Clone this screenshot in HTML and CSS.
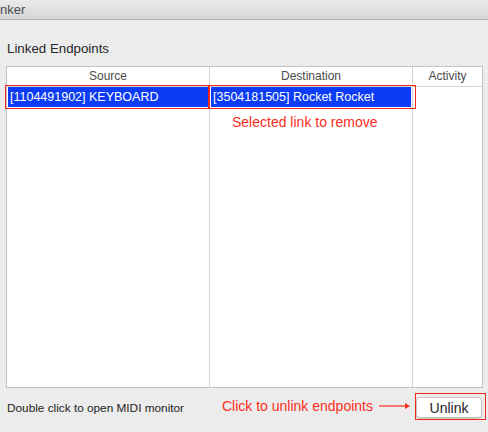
FILE: index.html
```html
<!DOCTYPE html>
<html>
<head>
<meta charset="utf-8">
<link rel="stylesheet" href="styles.css">
</head>
<body>
<div class="window">
  <div class="titlebar"><span class="title">nker</span></div>
  <div class="content">
    <div class="label">Linked Endpoints</div>
    <div class="table">
      <div class="col col-source">
        <div class="head">Source</div>
        <div class="cell selected">[1104491902] KEYBOARD</div>
      </div>
      <div class="col col-dest">
        <div class="head">Destination</div>
        <div class="cell selected">[3504181505] Rocket Rocket</div>
      </div>
      <div class="col col-activity">
        <div class="head">Activity</div>
        <div class="cell"></div>
      </div>
    </div>
    <div class="footer">
      <div class="hint">Double click to open MIDI monitor</div>
      <button class="btn">Unlink</button>
    </div>
    <div class="mark mark-source"></div>
    <div class="mark mark-dest"></div>
    <div class="mark mark-btn"></div>
    <div class="note note-selected">Selected link to remove</div>
    <div class="note note-click">Click to unlink endpoints
      <svg class="arrow" width="32" height="8" viewBox="0 0 32 8"><line x1="0" y1="4" x2="27" y2="4" stroke="#fb2d1c" stroke-width="1.2"/><path d="M26 1 L31 4 L26 7 Z" fill="#fb2d1c"/></svg>
    </div>
  </div>
</div>
</body>
</html>
```
FILE: styles.css
```css
* { box-sizing: border-box; }
html, body { margin: 0; padding: 0; }
body {
  width: 488px;
  height: 432px;
  overflow: hidden;
  background: #ececec;
  font-family: "Liberation Sans", Arial, sans-serif;
  color: #222;
}
.window { position: relative; width: 488px; height: 432px; }
.titlebar {
  height: 20px;
  background: linear-gradient(#ebebeb, #d6d6d6);
  border-bottom: 1px solid #b4b4b4;
  display: flex;
  align-items: center;
}
.title { font-size: 13px; color: #4b4b4b; margin-left: 0; }
.content { position: relative; padding: 0 6px; height: 412px; }
.label { font-size: 13.3px; color: #262626; padding: 21px 0 0 1px; line-height: 16px; height: 46px; }
.table {
  display: flex;
  width: 477px;
  height: 322px;
  border: 1px solid #c3c3c3;
  background: #fff;
}
.col { display: flex; flex-direction: column; border-right: 1px solid #d4d4d4; }
.col-source { width: 203px; }
.col-dest { width: 203px; }
.col-activity { width: 69px; border-right: none; }
.head {
  height: 20px;
  border-bottom: 1px solid #d4d4d4;
  font-size: 12px;
  color: #4a4a4a;
  text-align: center;
  line-height: 19px;
}
.cell {
  height: 20px;
  margin: 0 1px;
  font-size: 12.5px;
  line-height: 20px;
  padding-left: 2px;
  white-space: nowrap;
  overflow: hidden;
}
.cell.selected { background: #0c3cf6; color: #fff; }
.footer {
  height: 39px;
  display: flex;
  align-items: center;
  justify-content: space-between;
  padding: 0 0 0 1px;
}
.hint { font-size: 11.8px; color: #222; }
.btn {
  width: 66px;
  height: 21px;
  background: #fff;
  border: 1px solid #c4c4c4;
  border-radius: 4px;
  box-shadow: 0 1px 1px rgba(0,0,0,0.15);
  font-family: "Liberation Sans", Arial, sans-serif;
  font-size: 14px;
  color: #1e1e1e;
  padding: 0;
}
.mark { position: absolute; border: 1.5px solid #f0281c; }
.mark-source { left: 5px; top: 65px; width: 204px; height: 24px; }
.mark-dest { left: 209px; top: 65px; width: 207px; height: 24px; }
.mark-btn { left: 415px; top: 373px; width: 71px; height: 27px; }
.note { position: absolute; font-size: 14px; color: #fb2d1c; white-space: nowrap; display: flex; align-items: center; }
.note-selected { left: 232px; top: 94px; }
.note-click { left: 222px; top: 378px; }
.arrow { margin-left: 6px; }
```
